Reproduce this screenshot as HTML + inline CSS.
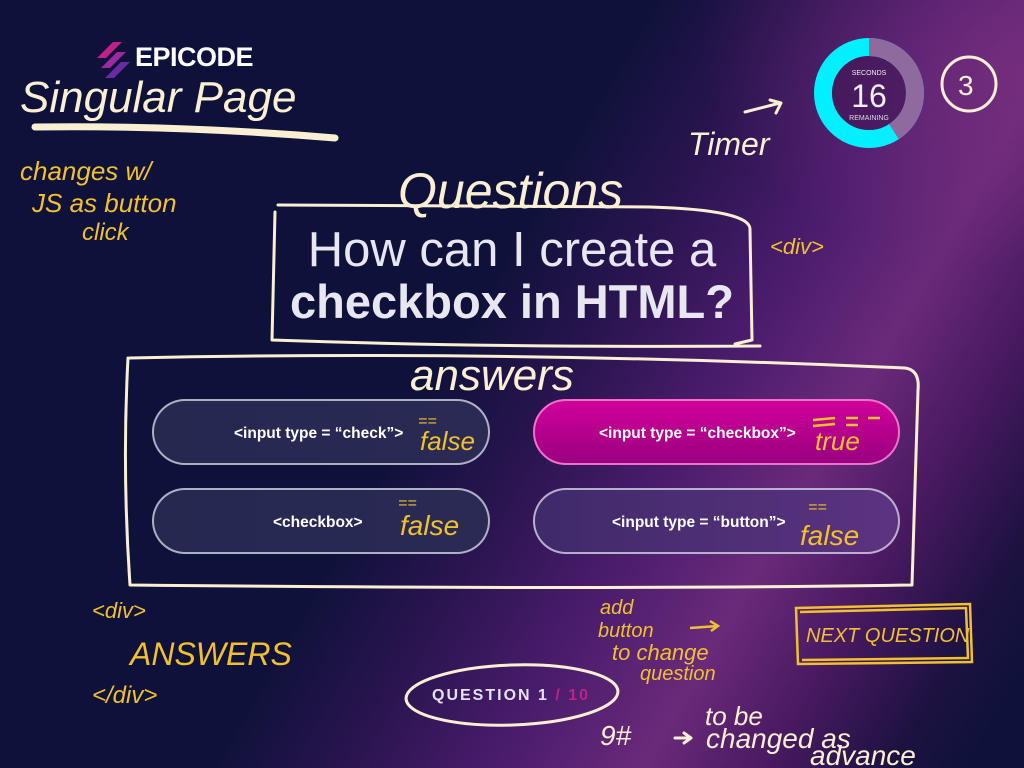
<!DOCTYPE html>
<html><head><meta charset="utf-8"><style>
html,body{margin:0;padding:0;}
body{width:1024px;height:768px;overflow:hidden;position:relative;font-family:"Liberation Sans",sans-serif;
background:linear-gradient(120deg,#0e1139 0%,#0e1139 44%,#2a1550 54%,#4a1c6c 64%,#6a2a7a 74%,#4a1a62 82%,#1c1240 91%,#0e1139 97%);}
.glow{position:absolute;inset:0;background:radial-gradient(ellipse 300px 200px at 1000px 60px,rgba(130,50,130,.55),transparent);}
.logo{position:absolute;left:103px;top:42px;color:#fff;font-weight:bold;font-size:27px;letter-spacing:-0.5px;}
.logo span{margin-left:32px}
.q{position:absolute;left:0;width:1024px;text-align:center;color:#e8e6f0;}
.btn{position:absolute;height:66px;border-radius:34px;color:#fff;font-weight:bold;font-size:15.5px;line-height:66px;box-sizing:border-box;border:2px solid rgba(220,220,235,.75);}
.d{background:linear-gradient(90deg,#262850,#2a2a55);}
.b4{background:linear-gradient(90deg,#3f2a6a,#5c3380);}
.pink{background:linear-gradient(180deg,#d0009a,#9a0080);border-color:#f070c8;}
.qc{position:absolute;left:432px;top:687px;color:#e4e2ee;font-size:16px;font-weight:bold;letter-spacing:2px;}
svg{position:absolute;left:0;top:0}
</style></head><body>
<div class="glow"></div>
<svg width="1024" height="768">
<polygon points="113,42 122,42 106,58 97,58" fill="#c0208a"/><polygon points="117,52 126,52 110,68 101,68" fill="#9a2aa0"/><polygon points="121,62 130,62 114,78 105,78" fill="#6a2aa0"/>
</svg>
<div class="logo"><span>EPICODE</span></div>
<div class="q" style="top:222px;font-size:49px;font-weight:normal">How can I create a</div>
<div class="q" style="top:274px;font-size:47px;font-weight:bold">checkbox in HTML?</div>
<div class="btn d" style="left:152px;top:399px;width:338px;"><span style="margin-left:80px">&lt;input type = “check”&gt;</span></div>
<div class="btn pink" style="left:533px;top:399px;width:367px;"><span style="margin-left:64px">&lt;input type = “checkbox”&gt;</span></div>
<div class="btn d" style="left:152px;top:488px;width:338px;"><span style="margin-left:119px">&lt;checkbox&gt;</span></div>
<div class="btn b4" style="left:533px;top:488px;width:367px;"><span style="margin-left:77px">&lt;input type = “button”&gt;</span></div>
<div class="qc">QUESTION 1 <span style="color:#c0208a">/ 10</span></div>
<svg width="1024" height="768" font-family="Liberation Sans, sans-serif">
<circle cx="869" cy="93" r="46" fill="rgba(60,20,80,.5)" stroke="#00f0ff" stroke-width="18"/>
<circle cx="869" cy="93" r="46" fill="none" stroke="#8f6a9e" stroke-width="18" stroke-dasharray="118 300" transform="rotate(-90 869 93)"/>
<text x="869" y="75" fill="#eee" font-size="7" text-anchor="middle">SECONDS</text>
<text x="869" y="107" fill="#f0eef6" font-size="32" text-anchor="middle">16</text>
<text x="869" y="120" fill="#ddd" font-size="7" text-anchor="middle">REMAINING</text>
<g fill="none" stroke="#fbefd3" stroke-width="3" stroke-linecap="round" stroke-linejoin="round">
<circle cx="969" cy="84" r="27"/>
<path d="M35 127 Q180 125 335 138" stroke-width="7"/>
<path d="M278 205 L650 207 Q752 210 750 230 L752 340 L735 344 M275 212 L272 340 Q500 348 760 346"/>
<path d="M130 358 Q500 350 905 368 Q920 370 918 390 L912 585 Q600 590 130 585 Q122 470 128 358"/>
<ellipse cx="512" cy="695" rx="106" ry="30" transform="rotate(-2 512 695)"/>
<path d="M745 112 L780 103 M770 100 L781 103 L776 113"/>
<path d="M675 738 L690 738 M684 733 L691 738 L684 743"/>
</g>
<g fill="none" stroke="#f0c030" stroke-width="2.5">
<path d="M796 608 L970 604 L972 662 L798 664 Z M800 612 L966 608 L968 658 L802 660"/>
<path d="M690 628 L718 626 M710 621 L718 626 L711 631"/>
<path d="M813 420 L835 418 M813 426 L835 424 M846 418 L858 418 M846 425 L858 425 M868 418 L880 418"/>
</g>
<g fill="#fbefd3" font-style="italic">
<text x="20" y="112" font-size="44">Singular Page</text>
<text x="398" y="208" font-size="50">Questions</text>
<text x="410" y="390" font-size="44">answers</text>
<text x="688" y="155" font-size="32">Timer</text>
<text x="958" y="95" font-size="28" font-style="normal">3</text>
<text x="600" y="745" font-size="28">9#</text>
<text x="705" y="725" font-size="26">to be</text>
<text x="706" y="748" font-size="28">changed as</text>
<text x="810" y="765" font-size="28">advance</text>
</g>
<g fill="#f0c030" font-style="italic">
<text x="20" y="180" font-size="26">changes w/</text>
<text x="32" y="212" font-size="26">JS as button</text>
<text x="82" y="240" font-size="24">click</text>
<text x="770" y="254" font-size="22">&lt;div&gt;</text>
<text x="92" y="618" font-size="22">&lt;div&gt;</text>
<text x="130" y="665" font-size="32">ANSWERS</text>
<text x="92" y="703" font-size="24">&lt;/div&gt;</text>
<text x="600" y="614" font-size="20">add</text>
<text x="598" y="637" font-size="20">button</text>
<text x="612" y="660" font-size="22">to change</text>
<text x="640" y="680" font-size="20">question</text>
<text x="806" y="642" font-size="20">NEXT QUESTION</text>
<text x="420" y="450" font-size="26">false</text>
<text x="815" y="450" font-size="26">true</text>
<text x="400" y="535" font-size="28">false</text>
<text x="800" y="545" font-size="28">false</text>
<text x="418" y="426" font-size="16">==</text>
<text x="398" y="508" font-size="16">==</text>
<text x="808" y="512" font-size="16">==</text>
</g>
</svg>
</body></html>
